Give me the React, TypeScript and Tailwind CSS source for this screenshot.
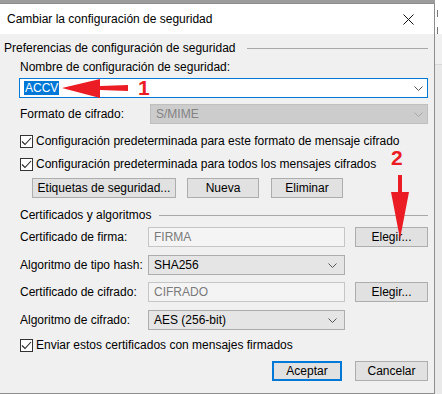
import { ReactNode } from "react";

const font = { fontFamily: '"Liberation Sans", Arial, sans-serif' };

function Chevron({ muted = false }: { muted?: boolean }) {
  return (
    <svg width="9" height="5" viewBox="0 0 9 5" fill="none" aria-hidden>
      <path d="M0.5 0.5L4.5 4.5L8.5 0.5" stroke={muted ? "#a8a8a8" : "#555"} strokeWidth="1" />
    </svg>
  );
}

function CheckBox({ label }: { label: string }) {
  return (
    <div className="flex h-4 items-center pl-5">
      <span className="flex h-[13px] w-[13px] items-center justify-center border border-[#333] bg-white">
        <svg width="11" height="9" viewBox="0 0 11 9" fill="none" aria-hidden>
          <path d="M1 4.5L4 7.5L10 1" stroke="#222" strokeWidth="1.1" />
        </svg>
      </span>
      <span className="ml-[3px] whitespace-nowrap">{label}</span>
    </div>
  );
}

function Btn({ children, className = "", primary = false }: { children: ReactNode; className?: string; primary?: boolean }) {
  return (
    <button
      type="button"
      className={
        "flex h-5 items-center justify-center whitespace-nowrap bg-[#e1e1e1] text-[12px] text-black " +
        (primary ? "border-2 border-[#0078d7] " : "border border-[#adadad] ") +
        className
      }
    >
      {children}
    </button>
  );
}

function GroupHead({ title, lineFrom }: { title: string; lineFrom: string }) {
  return (
    <div className="flex h-4 items-center">
      <span className="whitespace-nowrap">{title}</span>
      <span className={"h-px flex-1 bg-[#a8a8a8] " + lineFrom} />
    </div>
  );
}

function Select({ value, className = "" }: { value: string; className?: string }) {
  return (
    <div className={"flex h-5 items-center justify-between border border-[#adadad] bg-[#e5e5e5] pl-[5px] pr-[7px] " + className}>
      <span>{value}</span>
      <Chevron />
    </div>
  );
}

function Field({ value, className = "" }: { value: string; className?: string }) {
  return (
    <div className={"flex h-5 items-center border border-[#c6c6c6] bg-[#f4f4f4] pl-[5px] text-[#7a7a7a] " + className}>
      {value}
    </div>
  );
}

function Row({ label, children, className = "" }: { label: string; children: ReactNode; className?: string }) {
  return (
    <div className={"flex items-center pl-5 " + className}>
      <span className="w-[128px] whitespace-nowrap">{label}</span>
      {children}
    </div>
  );
}

export default function App() {
  return (
    <div className="relative flex h-[394px] w-[442px] overflow-hidden bg-[#9c9c9c] text-[12px] text-black" style={font}>
      <div className="mt-[3px] flex h-[391px] w-[435px] flex-col border-t border-r border-b border-[#8d8d8d] bg-[#f0f0f0]">
        {/* barra de título */}
        <div className="flex h-[30px] items-center justify-between bg-white pl-[7px] pr-[20px]">
          <span className="text-[12px]">Cambiar la configuración de seguridad</span>
          <svg width="11" height="11" viewBox="0 0 11 11" fill="none" aria-hidden>
            <path d="M0.5 0.5L10.5 10.5M10.5 0.5L0.5 10.5" stroke="#111" strokeWidth="1" />
          </svg>
        </div>

        <div className="flex flex-col pr-[6px]">
          <div className="mt-[6px] pl-1">
            <GroupHead title="Preferencias de configuración de seguridad" lineFrom="ml-3" />
          </div>
          <div className="mt-[3px] flex h-4 items-center pl-5">Nombre de configuración de seguridad:</div>
          <div className="ml-[19px] mt-[3px] flex h-5 items-center justify-between border border-[#0078d7] bg-white pl-[4px] pr-[4px]">
            <span className="bg-[#0078d7] px-[1px] leading-[14px] text-white">ACCV</span>
            <Chevron />
          </div>
          <div className="mt-[6px] flex items-center pl-5">
            <span className="w-[130px]">Formato de cifrado:</span>
            <div className="flex h-5 flex-1 items-center justify-between border border-[#bfbfbf] bg-[#cccccc] pl-[5px] pr-[4px] text-[#838383]">
              <span>S/MIME</span>
              <Chevron muted />
            </div>
          </div>
          <div className="mt-[9px]">
            <CheckBox label="Configuración predeterminada para este formato de mensaje cifrado" />
          </div>
          <div className="mt-[7px]">
            <CheckBox label="Configuración predeterminada para todos los mensajes cifrados" />
          </div>
          <div className="mt-[6px] flex pl-8">
            <Btn className="w-[144px]">Etiquetas de seguridad...</Btn>
            <Btn className="ml-[11px] w-[72px]">Nueva</Btn>
            <Btn className="ml-3 w-[72px]">Eliminar</Btn>
          </div>
          <div className="mt-[9px] pl-5">
            <GroupHead title="Certificados y algoritmos" lineFrom="ml-2" />
          </div>
          <Row label="Certificado de firma:" className="mt-1">
            <Field value="FIRMA" className="w-[197px]" />
            <Btn className="ml-[10px] flex-1">Elegir...</Btn>
          </Row>
          <Row label="Algoritmo de tipo hash:" className="mt-2">
            <Select value="SHA256" className="w-[197px]" />
          </Row>
          <Row label="Certificado de cifrado:" className="mt-[7px]">
            <Field value="CIFRADO" className="w-[197px]" />
            <Btn className="ml-[10px] flex-1">Elegir...</Btn>
          </Row>
          <Row label="Algoritmo de cifrado:" className="mt-2">
            <Select value="AES (256-bit)" className="w-[197px]" />
          </Row>
          <div className="mt-[7px]">
            <CheckBox label="Enviar estos certificados con mensajes firmados" />
          </div>
          <div className="mt-2 flex justify-end">
            <Btn primary className="w-[70px]">Aceptar</Btn>
            <Btn className="ml-[13px] w-[73px]">Cancelar</Btn>
          </div>
        </div>
      </div>

      {/* ventana de fondo */}
      <div className="flex flex-1 flex-col overflow-hidden">
        <div className="flex h-[34px] flex-col gap-[10px] bg-white pt-[10px]">
          <div className="ml-[2px] h-[7px] w-px bg-[#777]" />
          <div className="ml-[2px] h-[7px] w-[3px] border-l border-[#777]" />
        </div>
        <div className="h-[30px] bg-[#f0f0f0]" />
        <div className="h-px bg-[#d8d8d8]" />
        <div className="flex-1 bg-[#e9e9e9]" />
      </div>

      {/* flechas rojas */}
      <svg className="pointer-events-none absolute left-0 top-0" width="442" height="394" aria-hidden>
        <polygon points="62,88 100,79 100,86 128,85 128,91 100,90 100,98" fill="#ec1c24" />
        <polygon points="398,175 402,175 402,192 409,192 400,239 391,192 398,192" fill="#ec1c24" />
      </svg>
      <span className="pointer-events-none absolute left-[138px] top-[77px] text-[21px] font-bold leading-none text-[#ec1c24]">
        1
      </span>
      <span className="pointer-events-none absolute left-[391px] top-[147px] text-[21px] font-bold leading-none text-[#ec1c24]">
        2
      </span>
    </div>
  );
}
